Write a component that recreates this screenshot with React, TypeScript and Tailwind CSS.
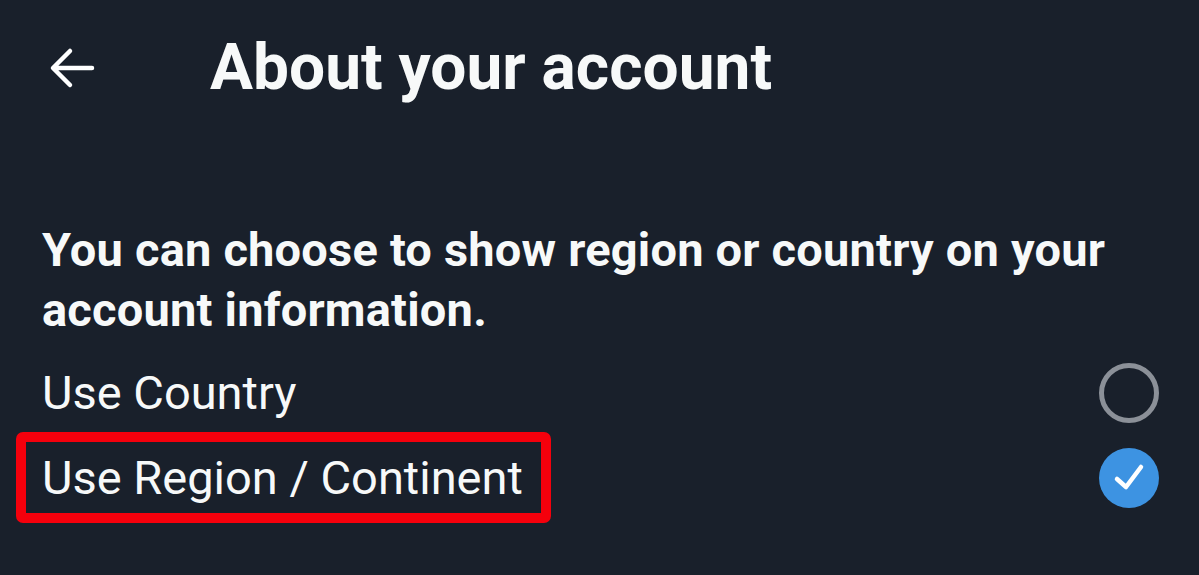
import React, { useState } from "react";

const options = ["Use Country", "Use Region / Continent"];

const BackArrow = () => (
  <svg width="48" height="44" viewBox="0 0 48 44" fill="none">
    <path
      d="M44 22H6M22 5L5 22l17 17"
      stroke="white"
      strokeWidth="4.5"
      strokeLinecap="round"
      strokeLinejoin="round"
    />
  </svg>
);

const Radio = ({ checked }: { checked: boolean }) =>
  checked ? (
    <div className="w-[60px] h-[60px] rounded-full bg-[#3d93e2] flex items-center justify-center">
      <svg width="36" height="36" viewBox="0 0 36 36" fill="none">
        <path
          d="M6 19l9 8 15-20"
          stroke="white"
          strokeWidth="4.5"
          strokeLinecap="round"
          strokeLinejoin="round"
        />
      </svg>
    </div>
  ) : (
    <div className="w-[60px] h-[60px] rounded-full border-[5px] border-[#8b9098]" />
  );

const App = () => {
  const [selected, setSelected] = useState(1);

  return (
    <div
      className="w-[1199px] h-[575px] overflow-hidden bg-[#19202b] text-[#f7f9f9]"
      style={{ fontFamily: "Roboto, 'Liberation Sans', sans-serif" }}
    >
      <div className="flex items-center h-[64px] mt-[36px]">
        <div className="w-[210px] pl-[48px] flex items-center">
          <BackArrow />
        </div>
        <h1 className="text-[64px] leading-none font-bold">About your account</h1>
      </div>

      <p className="mt-[120px] pl-[42px] pr-[40px] text-[47px] leading-[60px] font-bold tracking-[0.2px]">
        You can choose to show region or country on your account information.
      </p>

      <div className="flex flex-col mt-[10px]">
        {options.map((label, i) => (
          <div
            key={label}
            className="flex items-center justify-between h-[85px] pl-[42px] pr-[40px] cursor-pointer"
            onClick={() => setSelected(i)}
          >
            <span className="relative text-[47px] leading-none">
              {label}
              {i === 1 && (
                <span className="absolute -left-[26px] -right-[28px] -top-[22px] -bottom-[22px] border-[10px] border-[#f5000c] rounded-[7px]" />
              )}
            </span>
            <Radio checked={selected === i} />
          </div>
        ))}
      </div>
    </div>
  );
};

export default App;
